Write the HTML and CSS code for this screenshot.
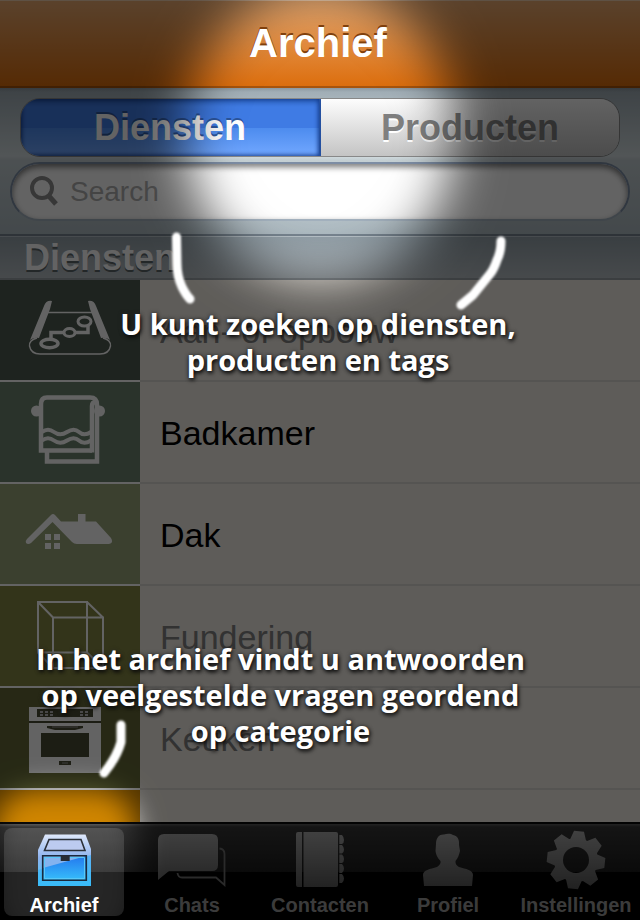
FILE: index.html
```html
<!DOCTYPE html>
<html lang="nl">
<head>
<meta charset="utf-8">
<meta name="viewport" content="width=device-width, initial-scale=1">
<title>Archief</title>
<link rel="stylesheet" href="styles.css">
</head>
<body>
<div class="app">
  <header class="navbar"><h1>Archief</h1></header>

  <div class="tools">
    <div class="segments">
      <button class="segment segment-on" type="button" aria-pressed="true">Diensten</button>
      <button class="segment" type="button" aria-pressed="false">Producten</button>
    </div>
    <label class="search">
      <svg width="30" height="32" viewBox="0 0 30 32" aria-hidden="true">
        <circle cx="12" cy="12" r="10" fill="none" stroke="#8e8e8e" stroke-width="4"/>
        <path d="M18 19L26 28" stroke="#8e8e8e" stroke-width="5"/>
      </svg>
      <input type="search" placeholder="Search" aria-label="Search">
    </label>
  </div>

  <main class="content">
    <h2>Diensten</h2>
    <ul class="list">
      <li class="row muted">
        <span class="thumb c1"><svg width="140" height="100" viewBox="0 0 140 100" aria-hidden="true">
          <g fill="none" stroke="#fff">
            <path d="M37 58Q29 60 29.500 66Q31 74 40 74H100Q109 74 110.500 66Q111 60 103 58M47 32.500H93" stroke-width="1.400"/>
            <ellipse cx="49.500" cy="63.500" rx="8.500" ry="4.200" stroke-width="3.500"/>
            <ellipse cx="69.500" cy="52.500" rx="5.500" ry="4" stroke-width="3"/>
            <ellipse cx="84.500" cy="41.500" rx="6.500" ry="4.500" stroke-width="3"/>
            <path d="M51 60V52.500H63M76 52.500H88V46" stroke-width="3.500"/>
          </g>
          <path d="M52 21Q46 20 44 26L30 60Q34 57 39 58L50 29ZM88 21Q94 20 96 26L110 60Q106 57 101 58L90 29Z" fill="#fff"/>
        </svg></span>
        <a href="#aan-of-opbouw">Aan- of opbouw</a>
      </li>
      <li class="row">
        <span class="thumb c2"><svg width="140" height="100" viewBox="0 0 140 100" aria-hidden="true">
          <circle cx="36.500" cy="29" r="5.500" fill="#fff"/><circle cx="99.500" cy="29" r="5.500" fill="#fff"/>
          <g fill="none" stroke="#fff" stroke-width="4.500">
            <path d="M92 68.500H41V22Q41 15.500 47 15.500H90Q97 15.500 97 23V79.500H47V70"/>
            <path d="M92 70.500V24Q92 20 96 20"/>
            <path d="M42 50Q48 45.500 54 50T67 50T79 50T91 50M42 58.500Q48 54 54 58.500T67 58.500T79 58.500T91 58.500" stroke-width="4"/>
          </g>
        </svg></span>
        <a href="#badkamer">Badkamer</a>
      </li>
      <li class="row">
        <span class="thumb c3"><svg width="140" height="100" viewBox="0 0 140 100" aria-hidden="true">
          <path d="M51 31Q53 29 55 31L61 37.500H78V30H85.500V37.500H96L111 54Q114 59 109 60H77Q74 60 72 58L52.500 38L31 59Q28 61 26 59Q25 57 27 55ZM45 50h6v6h-6zM54 50h6v6h-6zM45 59h6v6h-6zM54 59h6v6h-6z" fill="#fff"/>
        </svg></span>
        <a href="#dak">Dak</a>
      </li>
      <li class="row muted">
        <span class="thumb c4"><svg width="140" height="100" viewBox="0 0 140 100" aria-hidden="true">
          <path d="M38 16H87V66.500H38ZM53 31.500H103V82H53ZM38 16L53 31.500M87 16L103 31.500M87 66.500L103 82M38 66.500L53 82" fill="none" stroke="#fff" stroke-width="2"/>
        </svg></span>
        <a href="#fundering">Fundering</a>
      </li>
      <li class="row muted">
        <span class="thumb c5"><svg width="140" height="100" viewBox="0 0 140 100" aria-hidden="true">
          <path d="M29 19H101V85H29Z" fill="#fff"/>
          <path d="M37 21H93V29H37ZM29 33H101V35H29ZM41 45H89V69H41ZM47 38H83V40L75 42H55L47 40ZM59 73H71V77H59Z" fill="#4a4c35"/>
          <path d="M40 24H55M80 24H90M40 27H55M80 27H90" stroke="#bbb" stroke-width="2" stroke-dasharray="3 2"/>
          <path d="M52 39H78M62 75H68" stroke="#999" stroke-width="1"/>
        </svg></span>
        <a href="#keuken">Keuken</a>
      </li>
      <li class="row"><span class="thumb c6"></span></li>
    </ul>
  </main>

  <nav class="tabbar">
    <a class="tab tab-on" href="#archief" aria-current="page">
      <svg width="72" height="60" viewBox="0 0 72 60" aria-hidden="true">
        <defs>
          <linearGradient id="box" x1="0" y1="0" x2="0" y2="1"><stop offset="0" stop-color="#dfe8fb"/><stop offset=".45" stop-color="#8db2ee"/><stop offset="1" stop-color="#3cc8f8"/></linearGradient>
          <linearGradient id="drawer" x1="0" y1="0" x2="0" y2="1"><stop offset="0" stop-color="#2478ee"/><stop offset="1" stop-color="#36bdfa"/></linearGradient>
        </defs>
        <path d="M17 4.500H57.500L63 19V56H10V20Z" fill="url(#box)"/>
        <path d="M63 25L10 40V56H63Z" fill="#37b4f8" opacity=".6"/>
        <path d="M21 9.500H53L57 20.500H16.500Z" fill="#bccbf0" stroke="#2b3038" stroke-width="1.600"/>
        <path d="M15 26H58V50H15Z" fill="url(#drawer)"/>
        <path d="M15 26H58L15 38Z" fill="#84b3ef"/>
        <path d="M14.700 25.700H58.300V50.300H14.700Z" fill="none" stroke="#1b2a3c" stroke-width="1.600"/>
        <path d="M16.500 27.500H56.500V48.500H16.500Z" fill="none" stroke="#58c8f8" stroke-width="1"/>
        <path d="M32.700 25.300H41.700V31H32.700Z" fill="#272c34"/>
      </svg>
      <span>Archief</span>
    </a>
    <a class="tab" href="#chats">
      <svg width="72" height="60" viewBox="0 0 72 60" aria-hidden="true">
        <defs><linearGradient id="metal" gradientUnits="userSpaceOnUse" x1="0" y1="0" x2="0" y2="60"><stop offset="0" stop-color="#a8a8a8"/><stop offset="1" stop-color="#555"/></linearGradient></defs>
        <path d="M8 4H56Q62 4 62 10V35Q62 41 56 41H13L2 50V10Q2 4 8 4Z" fill="url(#metal)"/>
        <path d="M63.500 18.500Q68.500 19 68.500 24V55L60 47.500H26Q22 47.500 21.500 43" fill="none" stroke="#6c6c6c" stroke-width="1.800"/>
      </svg>
      <span>Chats</span>
    </a>
    <a class="tab" href="#contacten">
      <svg width="72" height="60" viewBox="0 0 72 60" aria-hidden="true">
        <path d="M14 2H18V57H14Q12 57 12 55V4Q12 2 14 2ZM19.500 2H52Q54 2 54 4V55Q54 57 52 57H19.500ZM55.300 5H58Q60 7 60 10T58 14H55.300ZM55.300 15H58Q60 17 60 19.500T58 23.500H55.300ZM55.300 24.500H58Q60 26 60 29T58 33H55.300ZM55.300 34H58Q60 36 60 38.500T58 43H55.300ZM55.300 44H58Q60 46 60 48.500T58 53H55.300Z" fill="url(#metal)"/>
      </svg>
      <span>Contacten</span>
    </a>
    <a class="tab" href="#profiel">
      <svg width="72" height="60" viewBox="0 0 72 60" aria-hidden="true">
        <path d="M24 14C24 7 28 4 32 4.500C35 3.500 39 3.500 41 5C46 6 47.500 10 47 15L48 21C47 25 46 28 43.500 31C43 34 45 36 47 37C54 39 61 40 61 45L60 56H12L11 45C11 40 18 39 25 37C28 35 29 33 28.500 31C25 28 24 24 23.500 21Z" fill="url(#metal)"/>
      </svg>
      <span>Profiel</span>
    </a>
    <a class="tab" href="#instellingen">
      <svg width="72" height="60" viewBox="0 0 72 60" aria-hidden="true">
        <defs>
          <mask id="gearHole"><rect width="72" height="60" fill="#fff"/><circle cx="36" cy="30" r="13" fill="#000"/></mask>
          <clipPath id="gear">
            <circle cx="36" cy="30" r="22"/>
            <path id="tooth" d="M28 10L31 1H41L44 10Z" transform="rotate(6 36 30)"/>
            <use href="#tooth" transform="rotate(45 36 30)"/><use href="#tooth" transform="rotate(90 36 30)"/><use href="#tooth" transform="rotate(135 36 30)"/><use href="#tooth" transform="rotate(180 36 30)"/><use href="#tooth" transform="rotate(225 36 30)"/><use href="#tooth" transform="rotate(270 36 30)"/><use href="#tooth" transform="rotate(315 36 30)"/>
          </clipPath>
        </defs>
        <g mask="url(#gearHole)"><rect width="72" height="60" fill="url(#metal)" clip-path="url(#gear)"/></g>
      </svg>
      <span>Instellingen</span>
    </a>
  </nav>

  <div class="coach">
    <svg class="shade" width="100%" height="100%" aria-hidden="true">
      <defs>
        <filter id="soft1" x="-50%" y="-50%" width="200%" height="200%" color-interpolation-filters="sRGB"><feGaussianBlur stdDeviation="25"/></filter>
        <filter id="soft2" x="-50%" y="-50%" width="200%" height="200%" color-interpolation-filters="sRGB"><feGaussianBlur stdDeviation="14"/></filter>
        <filter id="chalk" x="-50%" y="-50%" width="200%" height="200%"><feGaussianBlur stdDeviation=".9"/></filter>
        <mask id="spots" maskUnits="userSpaceOnUse" x="0" y="0" width="100%" height="100%">
          <rect width="100%" height="100%" fill="#fff"/>
          <ellipse cx="50%" cy="134" rx="134" ry="146" fill="#000" filter="url(#soft1)"/>
          <rect x="-6" y="790" width="142" height="150" rx="40" fill="#000" filter="url(#soft2)"/>
        </mask>
      </defs>
      <rect width="100%" height="100%" fill="#000" fill-opacity=".61" mask="url(#spots)"/>
      <g fill="none" stroke="#fff" stroke-width="9" stroke-linecap="round" stroke-linejoin="round" filter="url(#chalk)">
        <path d="M176.500 237L177 264Q177 276 182 287Q186 295 190 299"/>
        <path d="M501 241Q501 252 497 260Q494 269 490 274L473 295L461 305"/>
        <path d="M121 725V742Q117 757 104 773"/>
      </g>
    </svg>
    <p class="hint hint-search">U kunt zoeken op diensten,<br>producten en tags</p>
    <p class="hint hint-archive">In het archief vindt u antwoorden<br>op veelgestelde vragen geordend<br>op categorie</p>
  </div>
</div>
</body>
</html>
```
FILE: styles.css
```css
* { box-sizing: border-box; }

body {
  margin: 0;
  font-family: "Liberation Sans", Arial, sans-serif;
  background: #f1ece4;
}

h1, h2, p, ul { margin: 0; padding: 0; }
a { color: inherit; text-decoration: none; }
svg { display: block; }

.app {
  position: relative;
  display: flex;
  flex-direction: column;
  height: 100vh;
  overflow: hidden;
}

.navbar {
  display: flex;
  justify-content: center;
  height: 88px;
  padding: 20px 4px 0 0;
  flex: none;
  border-top: 1px solid #f3d0b0;
  border-bottom: 2px solid #a8540c;
  background: linear-gradient(#e8a970, #dc6e0e);
}

/* The title stays at full brightness above the shade. */
.navbar h1 {
  position: relative;
  z-index: 1;
  color: #fff;
  font-size: 40px;
  line-height: 44px;
  text-shadow: 0 -2px 0 #80400c;
}

.tools {
  flex: none;
  padding: 10px 10px 13px;
  background: linear-gradient(#8d99a1, #a1aeb6 4px, #d2dcdf 68px, #c4cfd3 72px, #aebbc2);
  border-bottom: 2px solid #788590;
}

.segments {
  display: flex;
  height: 59px;
  margin: 0 10px 5px;
  border: 1px solid #888;
  border-radius: 20px;
  overflow: hidden;
}

.segment {
  flex: 1;
  padding: 0;
  border: 0;
  background: linear-gradient(#fdfdfd, #c4c4c4);
  color: #7f7f7f;
  font: bold 36px/56px "Liberation Sans", Arial, sans-serif;
  text-shadow: 0 2px 0 #fff;
}

.segment-on {
  border-right: 2px solid #2450a0;
  background: linear-gradient(#2f67c4, #3f7be4 14%, #3f7be4 50%, #4c8bee 50%, #72a8ff);
  box-shadow: inset 0 0 4px 1px #143c8c;
  color: #fff;
  text-shadow: 0 -2px 0 #2c559c;
}

.search {
  display: flex;
  align-items: center;
  gap: 10px;
  height: 59px;
  padding: 0 20px 0 18px;
  border: 2px solid #7d8da4;
  border-bottom-color: #a3b1be;
  border-radius: 30px;
  background: #fff;
  box-shadow: inset 0 3px 6px #777;
}

.search input {
  flex: 1;
  min-width: 0;
  padding: 0;
  border: 0;
  outline: 0;
  background: none;
  font: 28px/32px "Liberation Sans", Arial, sans-serif;
}

.search input::placeholder { color: #b0b0b0; opacity: 1; }

.content {
  flex: 1;
  min-height: 0;
  overflow: hidden;
}

.content h2 {
  height: 44px;
  padding-left: 24px;
  border-top: 1px solid #b8c2c8;
  border-bottom: 2px solid #989fa4;
  background: linear-gradient(#94a1a9, #b6bec3);
  color: #fff;
  font-size: 36px;
  line-height: 42px;
  text-shadow: 0 2px 0 #5c6468;
}

.list { list-style: none; }

.row {
  display: flex;
  align-items: center;
  height: 102px;
  border-bottom: 2px solid #dcd8d2;
  color: #000;
  font-size: 34px;
}

.row a { flex: 1; padding: 2px 0 0 20px; }
.muted { color: #808080; }

.thumb {
  width: 140px;
  height: 102px;
  flex: none;
  align-self: flex-start;
  border-bottom: 2px solid #fff;
}

.c1 { background: #4d5a50; }
.c2 { background: #6c846f; }
.c3 { background: #98a57a; }
.c4 { background: #848643; }
.c5 { background: #646836; }
.c6 { background: #d08600; }

.tabbar {
  position: relative;
  display: flex;
  flex: none;
  height: 98px;
  border-top: 2px solid #0a0a0a;
  background: linear-gradient(#5a5a5a, #363636 3px, #1c1c1c 48px, #000 48px);
}

.tab {
  display: flex;
  flex: 1;
  flex-direction: column;
  align-items: center;
  gap: 4px;
  min-width: 0;
  margin: 4px;
  padding-top: 2px;
  border-radius: 8px;
  color: #999;
  font-size: 20px;
  font-weight: bold;
  line-height: 22px;
}

.tab-on { background: rgba(255, 255, 255, .15); color: #fff; }

.coach {
  position: absolute;
  inset: 0;
  pointer-events: none;
}

.shade { position: absolute; inset: 0; }

.hint {
  position: absolute;
  color: #fff;
  font: bold 29px/36px "Open Sans", "Noto Sans", sans-serif;
  text-align: center;
  text-shadow: 1px 2px 4px #000, 0 0 4px #333;
  white-space: nowrap;
}

.hint-search { top: 306px; left: 0; right: 4px; }
.hint-archive { top: 641px; left: 36px; }
```
